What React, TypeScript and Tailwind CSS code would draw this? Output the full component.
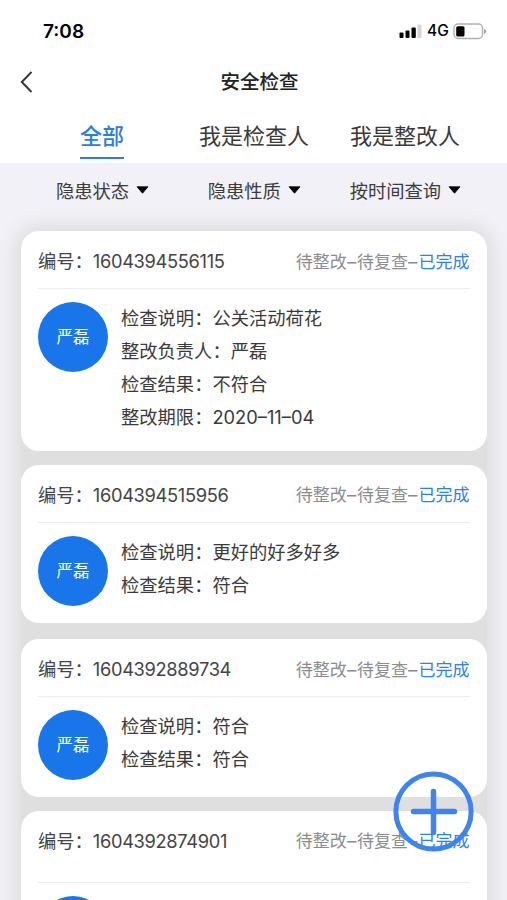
type Row = { label: string; value: string };
type Item = { code: string; rows: Row[]; card: string; head: string };

const items: Item[] = [
  {
    code: '1604394556115',
    card: 'h-[220px]',
    head: 'h-[58px]',
    rows: [
      { label: '检查说明', value: '公关活动荷花' },
      { label: '整改负责人', value: '严磊' },
      { label: '检查结果', value: '不符合' },
      { label: '整改期限', value: '2020–11–04' },
    ],
  },
  {
    code: '1604394515956',
    card: 'mt-[13.5px] h-[158px]',
    head: 'h-[58px]',
    rows: [
      { label: '检查说明', value: '更好的好多好多' },
      { label: '检查结果', value: '符合' },
    ],
  },
  {
    code: '1604392889734',
    card: 'mt-[16.5px] h-[157.5px]',
    head: 'h-[58px]',
    rows: [
      { label: '检查说明', value: '符合' },
      { label: '检查结果', value: '符合' },
    ],
  },
  {
    code: '1604392874901',
    card: 'mt-[14px] h-[180px]',
    head: 'h-[72px]',
    rows: [],
  },
];

function StatusBar() {
  return (
    <header className="flex h-[62px] shrink-0 items-center justify-between pl-[43px] pr-[20px] text-black">
      <span className="text-[19px] font-semibold leading-none">7:08</span>
      <div className="flex items-center">
        <svg width="24" height="15" viewBox="0 0 24 15">
          <rect x="0.5" y="8.5" width="4" height="5.5" rx="1" />
          <rect x="6.5" y="6.5" width="4" height="7.5" rx="1" />
          <rect x="12.5" y="3.5" width="4.3" height="10.5" rx="1" />
          <rect x="18.5" y="0.5" width="4" height="13.5" rx="1" fill="#d4d4d4" />
        </svg>
        <span className="ml-[4px] w-[26px] text-[15.5px] font-medium leading-none">4G</span>
        <svg width="34" height="17" viewBox="0 0 34 17">
          <rect x="1" y="1" width="28.5" height="14.5" rx="4" fill="none" stroke="#b0b0b0" strokeWidth="1.4" />
          <rect x="3.2" y="3.2" width="8.3" height="10.2" rx="1.5" />
          <path d="M31 6v5c1.3-.5 2.1-1.3 2.1-2.5S32.3 6.5 31 6z" fill="#9a9a9a" />
        </svg>
      </div>
    </header>
  );
}

function Filter({ label }: { label: string }) {
  return (
    <button className="flex items-center gap-[7px] text-[18.3px] leading-[26px] text-[#3c3c3c]">
      {label}
      <svg className="-mt-px" width="13" height="8" viewBox="0 0 13 8" fill="#000">
        <path d="M1 .8h11L6.5 7.2z" stroke="#000" strokeLinejoin="round" strokeWidth=".8" />
      </svg>
    </button>
  );
}

function Dash() {
  return <span className="inline-block w-[10.4px] origin-left scale-x-110">–</span>;
}

function Card({ item }: { item: Item }) {
  return (
    <article className={`relative shrink-0 rounded-[18px] bg-white px-[17.5px] ${item.card}`}>
      <div className={`flex items-start justify-between border-b border-[#ededed] pt-[17px] leading-[26px] ${item.head}`}>
        <h2 className="text-[18.3px] text-[#444]">
          编号：<span className="tracking-[-0.34px]">{item.code}</span>
        </h2>
        <p className="relative top-[0.5px] text-[17px] text-[#8c8c8c]">
          待整改
          <Dash />
          待复查
          <Dash />
          <span className="text-[#2e7fee]">已完成</span>
        </p>
      </div>
      <div className="flex pt-[13px]">
        <div className="flex size-[70px] shrink-0 items-center justify-center rounded-full bg-[#1976ea] pt-px text-[16.5px] text-white">
          {item.rows.length > 0 && '严磊'}
        </div>
        <div className="ml-[13px] text-[18.3px] leading-[33px] text-[#3a3a3a]">
          {item.rows.map((row) => (
            <p key={row.label}>
              {row.label}：{row.value}
            </p>
          ))}
        </div>
      </div>
    </article>
  );
}

export default function App() {
  return (
    <div className="relative flex h-[900px] w-[507px] flex-col overflow-hidden bg-[#f1f1f7] font-['Inter','Noto_Sans_CJK_SC',sans-serif]">
      <div className="h-[163px] shrink-0 bg-white">
        <StatusBar />
        <div className="flex h-[40px] items-center pl-[20px]">
          <svg width="13" height="22" viewBox="0 0 13 22" fill="none" stroke="#333" strokeWidth="1.9">
            <path d="M11.5 1L1.8 11l9.7 10" />
          </svg>
          <h1 className="relative top-[0.5px] ml-[187.5px] text-[19.5px] font-medium text-[#222]">安全检查</h1>
        </div>
        <nav className="flex h-[57px] items-start pl-[80px] pt-[15px] text-[22px] leading-[38px] text-[#3a3a3a]">
          <span className="h-[42px] border-b-[2.5px] border-[#2b7ce8] font-medium text-[#2b7ce8]">全部</span>
          <span className="ml-[75px]">我是检查人</span>
          <span className="ml-[41px]">我是整改人</span>
        </nav>
      </div>
      <div className="flex h-[68px] shrink-0 items-center pb-[13px] pl-[56px]">
        <Filter label="隐患状态" />
        <div className="w-[58.5px]" />
        <Filter label="隐患性质" />
        <div className="w-[49px]" />
        <Filter label="按时间查询" />
      </div>
      <main className="relative ml-[20.5px] flex w-[466.5px] flex-col">
        <div className="absolute inset-0 rounded-[18px] bg-[#dfdfdf] shadow-[0_0_20px_5px_#dcdcdc]" />
        {items.map((item) => (
          <Card key={item.code} item={item} />
        ))}
      </main>
      <button aria-label="+" className="absolute left-[393px] top-[771px]">
        <svg width="81" height="81" viewBox="0 0 81 81" fill="none" stroke="#3d84ee" strokeLinecap="round">
          <circle cx="40.5" cy="40.5" r="37.6" strokeWidth="5" />
          <path d="M40.5 20.5v41M20.5 40.5h41" strokeWidth="5.5" />
        </svg>
      </button>
    </div>
  );
}
